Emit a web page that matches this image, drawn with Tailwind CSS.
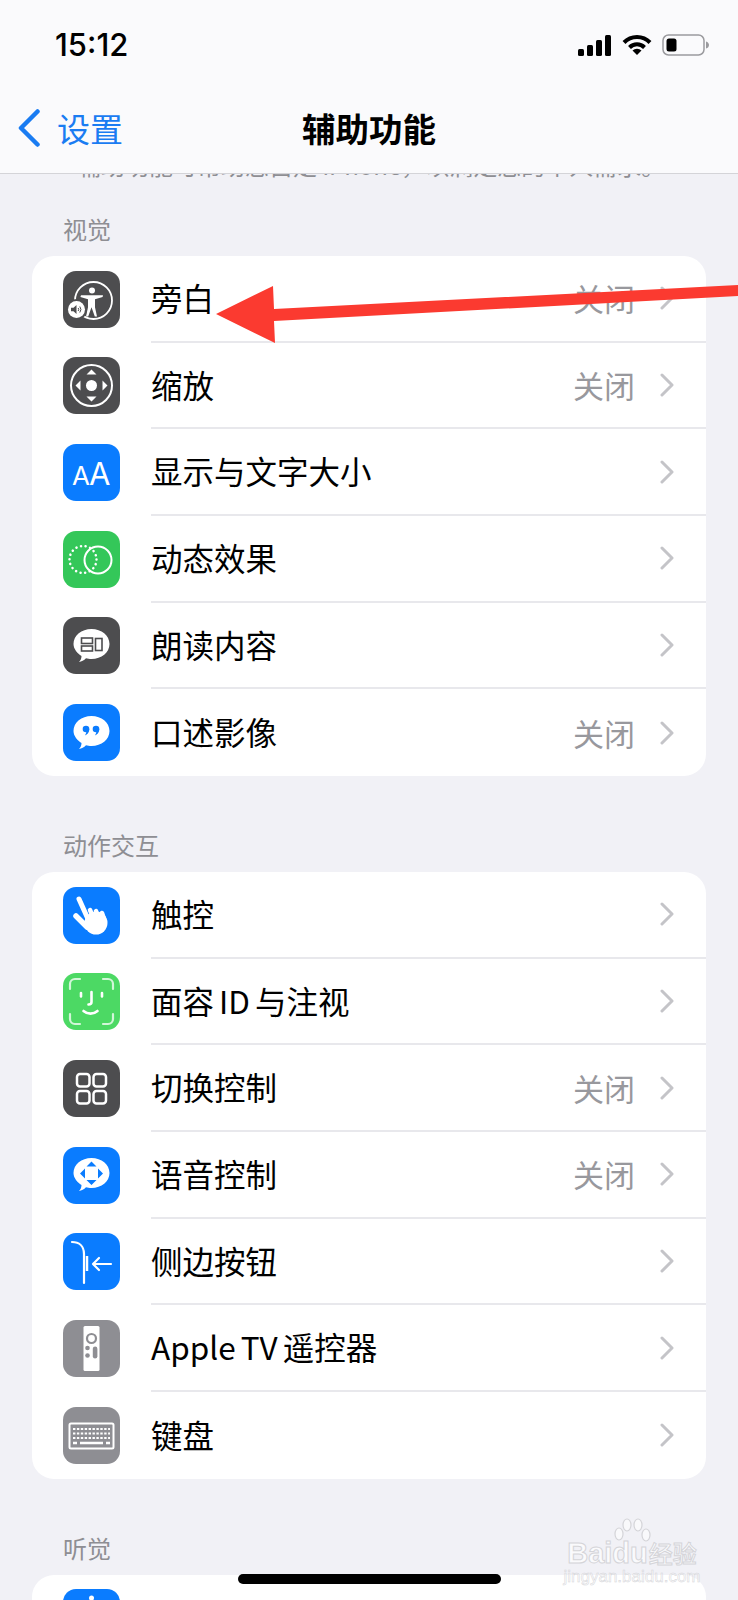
<!DOCTYPE html>
<html lang="zh-CN">

<head>
    <meta charset="UTF-8">
    <meta name="viewport" content="width=device-width, initial-scale=1.0">
    <title>辅助功能</title>
    <script src="https://cdn.jsdelivr.net/npm/@tailwindcss/browser@4"></script>
</head>

<body class="bg-[#f1f1f6]">
    <div class="relative w-[738px] h-[1600px] overflow-hidden bg-[#f1f1f6] text-black font-['Noto_Sans_CJK_SC','Liberation_Sans',sans-serif]">

        <!-- Status bar + nav -->
        <header class="relative z-10 h-[174px] bg-[#fafafc] border-b border-[#d4d4d8]">
            <div class="flex items-center justify-between h-[90px] pl-[55px] pr-[28px]">
                <span class="text-[31px] font-medium font-['Inter',sans-serif] tracking-[0px]">15:12</span>
                <div class="flex items-center gap-[10px]">
                    <svg width="34" height="21" viewBox="0 0 34 21" fill="black">
                        <rect x="0" y="14" width="6" height="7" rx="1.5" />
                        <rect x="9" y="10" width="6" height="11" rx="1.5" />
                        <rect x="18" y="5" width="6" height="16" rx="1.5" />
                        <rect x="27" y="0" width="6" height="21" rx="1.5" />
                    </svg>
                    <svg width="30" height="22" viewBox="0 0 30 22" fill="none" stroke="black" stroke-width="4">
                        <path d="M2 8.5a18 18 0 0 1 26 0" />
                        <path d="M7.5 13.5a10.500 10.500 0 0 1 15 0" />
                        <path d="M15 21l-4.500-4.500a6.500 6.500 0 0 1 9 0z" fill="black" stroke="none" />
                    </svg>
                    <svg width="48" height="22" viewBox="0 0 48 22" fill="none">
                        <rect x="1" y="1" width="41" height="20" rx="5.500" stroke="#9a9a9e" stroke-width="1.500" />
                        <rect x="4.500" y="4.500" width="10" height="13" rx="2.500" fill="black" />
                        <path d="M44 7.500c2 .5 3 2 3 3.500s-1 3-3 3.500z" fill="#9a9a9e" />
                    </svg>
                </div>
            </div>
            <div class="grid grid-cols-[1fr_auto_1fr] items-center h-[80px] pb-[4px]">
                <div class="flex items-center pl-[18px] gap-[17px] text-[#1a7cf2]">
                    <svg width="22" height="38" viewBox="0 0 22 38" fill="none" stroke="#1a7cf2" stroke-width="4.500" stroke-linecap="round" stroke-linejoin="round">
                        <path d="M19.500 2.500L3 19l16.500 16.500" />
                    </svg>
                    <span class="text-[33px] leading-none">设置</span>
                </div>
                <h1 class="text-[33.500px] leading-none font-bold">辅助功能</h1>
                <div></div>
            </div>
        </header>

        <p class="mt-[-24px] h-[30px] pl-[77px] text-[24px] leading-[30px] text-[#8e8e93] whitespace-nowrap">辅助功能可帮助您自定 iPhone，以满足您的个人需求。</p>

        <main id="sections" class="mt-[35px]"></main>

        <!-- Red annotation arrow -->
        <svg class="absolute left-0 top-0 z-20" width="738" height="360" viewBox="0 0 738 360">
            <path d="M216 314L273 286L274 309L738 285L738 296L274 321L275 343Z" fill="#fb3a30" />
        </svg>

        <!-- Watermark -->
        <div class="absolute z-20 left-[566px] top-[1518px] w-[132px] flex flex-col items-center text-white/70 font-['Liberation_Sans',sans-serif] whitespace-nowrap">
            <svg width="40" height="26" viewBox="0 0 40 26" fill="white" fill-opacity="0.6" stroke="#d4d4d8" stroke-width="1.200">
                <ellipse cx="7" cy="16" rx="4" ry="6" />
                <ellipse cx="15" cy="7" rx="4" ry="6" />
                <ellipse cx="26" cy="7" rx="4" ry="6" />
                <ellipse cx="34" cy="17" rx="4" ry="6" />
            </svg>
            <div class="flex items-center text-[29px] leading-[26px] font-bold [-webkit-text-stroke:1px_#d4d4d8] -mt-[4px]">Baidu<span class="text-[24px] ml-[1px] font-medium font-['Noto_Sans_CJK_SC',sans-serif]">经验</span></div>
            <div class="text-[17px] leading-[20px] mt-[1px] text-white/50 [-webkit-text-stroke:0.5px_#d4d4d8]">jingyan.baidu.com</div>
        </div>

        <!-- Home indicator -->
        <div class="absolute z-30 left-[238px] top-[1574px] w-[263px] h-[10px] rounded-full bg-black"></div>
    </div>

    <script>
        const icons = {
            voiceover: `<circle cx="30.500" cy="29.500" r="18.500" fill="none" stroke="white" stroke-width="1.800"/><circle cx="29" cy="19.500" r="3" fill="white"/><path d="M18 24.200h22l-.4 1.800-7.600 2.200v8l2 9.300h-2.200l-3.300-9.300-3.300 9.300h-2.200l2-9.300v-8l-7.600-2.200z" fill="white"/><circle cx="13.500" cy="38.500" r="10.500" fill="#4d4d4f"/><circle cx="13.500" cy="38.500" r="8.500" fill="white"/><path d="M8 36.700h2.500l3-2.700v9l-3-2.700H8z" fill="#4d4d4f"/><path d="M15.200 37a2.500 2.500 0 0 1 0 3M16.800 35.500a5 5 0 0 1 0 6" fill="none" stroke="#4d4d4f" stroke-width="1"/>`,
            zoom: `<circle cx="28.500" cy="28.500" r="20.500" fill="none" stroke="white" stroke-width="2"/><circle cx="28.500" cy="28.500" r="5.500" fill="white"/><path d="M28.500 12.500l5 5h-10zM28.500 44.500l-5-5h10zM12.500 28.500l5-5v10zM44.500 28.500l-5 5v-10z" fill="white"/>`,
            text: `<text x="9" y="40.500" font-size="26" fill="white" font-family="Inter, sans-serif">A</text><text x="26" y="40.500" font-size="31" fill="white" font-family="Inter, sans-serif">A</text>`,
            motion: `<circle cx="20" cy="28.500" r="13.500" fill="none" stroke="white" stroke-width="2.500" stroke-linecap="round" stroke-dasharray="0.1 4.600"/><circle cx="35" cy="29" r="13.500" fill="none" stroke="white" stroke-width="2"/>`,
            speech: `<path d="M28.500 12c10 0 18 6.500 18 15s-8 15-18 15c-2 0-4-.3-5.500-.7-2 2-4.500 3.500-7 3.700 1.500-1.500 2.500-3.500 2.500-6-4-2.500-8-7-8-12 0-8.500 8-15 18-15z" fill="white"/><rect x="18.500" y="21" width="11" height="5.500" fill="none" stroke="#4d4d4f" stroke-width="1.600"/><rect x="18.500" y="29" width="11" height="5" fill="none" stroke="#4d4d4f" stroke-width="1.600"/><rect x="32.500" y="21.500" width="6.500" height="12" fill="none" stroke="#4d4d4f" stroke-width="1.600"/>`,
            audio: `<path d="M28.500 12c10 0 18 6.500 18 15s-8 15-18 15c-2 0-4-.3-5.500-.7-2 2-4.500 3.500-7 3.700 1.500-1.500 2.500-3.500 2.500-6-4-2.500-8-7-8-12 0-8.500 8-15 18-15z" fill="white"/><circle cx="23" cy="25" r="3.300" fill="#0a7cff"/><path d="M26.300 25c0 3.500-1.800 5.500-4.500 6.500 1-1.500 1.500-2.500 1.500-4z" fill="#0a7cff"/><circle cx="33" cy="25" r="3.300" fill="#0a7cff"/><path d="M36.300 25c0 3.500-1.800 5.500-4.500 6.500 1-1.500 1.500-2.500 1.500-4z" fill="#0a7cff"/>`,
            touch: `<g stroke="white" stroke-linecap="round" fill="none"><path d="M16 12l9 20" stroke-width="5"/><path d="M13 29l11 11" stroke-width="5.500"/><path d="M27 23l3 7M33 24l2.500 6M39 26l2 6" stroke-width="4.500"/></g><circle cx="33" cy="36" r="11.500" fill="white"/>`,
            face: `<g fill="none" stroke="white" stroke-opacity="0.75" stroke-width="2.200" stroke-linecap="round"><path d="M7 16v-5a5 5 0 0 1 5-5h5M40 6h5a5 5 0 0 1 5 5v5M7 41v5a5 5 0 0 0 5 5h5M40 51h5a5 5 0 0 0 5-5v-5"/></g><g fill="none" stroke="white" stroke-width="2.600" stroke-linecap="round"><path d="M18 20v3.500M39 20v3.500"/><path d="M28.500 19v10c0 2-1 2.500-3 2.500"/><path d="M20.500 38c4 3.500 10 3.500 14 0"/></g>`,
            switcher: `<g fill="none" stroke="white" stroke-width="2.500"><rect x="14" y="14" width="12.500" height="12.500" rx="3"/><rect x="30.500" y="14" width="12.500" height="12.500" rx="3"/><rect x="14" y="31" width="12.500" height="12.500" rx="3"/><rect x="30.500" y="31" width="12.500" height="12.500" rx="3"/></g>`,
            voice: `<path d="M28.500 11c10 0 18 6.500 18 15s-8 15-18 15c-2 0-4-.3-5.500-.7-2 2-4.500 3.500-7 3.700 1.500-1.500 2.500-3.500 2.500-6-4-2.500-8-7-8-12 0-8.500 8-15 18-15z" fill="white"/><path d="M28.500 14.500l5 5h-10zM28.500 38l-5-5h10zM17 26.500l5-5v10zM40 26.500l-5 5v-10z" fill="#0a7cff"/>`,
            side: `<g fill="none" stroke="white" stroke-linecap="round"><path d="M9 9c7 0 12 4 12 12v29" stroke-width="2.200"/><path d="M24 23v15" stroke-width="2.500" stroke-linecap="butt"/><path d="M48 31H31M36 25l-6 6 6 6" stroke-width="2.200" stroke-linejoin="round"/></g>`,
            remote: `<rect x="20.500" y="6" width="16" height="45" rx="1.500" fill="white"/><circle cx="28.500" cy="18.500" r="4.500" fill="none" stroke="#8e8e93" stroke-width="2.200"/><circle cx="24.500" cy="28" r="2.300" fill="#8e8e93"/><circle cx="24.500" cy="35.500" r="2.300" fill="#8e8e93"/><rect x="29.800" y="26.500" width="4.600" height="12" rx="2.300" fill="#8e8e93"/>`,
            keyboard: `<rect x="6.500" y="16.500" width="44" height="25" rx="1.500" fill="none" stroke="white" stroke-width="2"/><g fill="none" stroke="white" stroke-width="2.200" stroke-dasharray="2.400 1.500"><path d="M10 22h37M10 26.500h37M10 31h37"/></g><path d="M17 36h23" stroke="white" stroke-width="2.500"/><path d="M10 36h4M43 36h4" stroke="white" stroke-width="2.500"/>`,
            hearing: `<circle cx="28.500" cy="9" r="2.500" fill="white"/>`
        };

        const sections = [
            {
                title: "视觉",
                rows: [
                    { icon: "voiceover", color: "bg-[#4d4d4f]", name: "旁白", value: "关闭" },
                    { icon: "zoom", color: "bg-[#4d4d4f]", name: "缩放", value: "关闭" },
                    { icon: "text", color: "bg-[#0a7cff]", name: "显示与文字大小" },
                    { icon: "motion", color: "bg-[#34c759]", name: "动态效果" },
                    { icon: "speech", color: "bg-[#4d4d4f]", name: "朗读内容" },
                    { icon: "audio", color: "bg-[#0a7cff]", name: "口述影像", value: "关闭" }
                ]
            },
            {
                title: "动作交互",
                rows: [
                    { icon: "touch", color: "bg-[#0a7cff]", name: "触控" },
                    { icon: "face", color: "bg-[#4cd964]", name: "面容 ID 与注视" },
                    { icon: "switcher", color: "bg-[#4d4d4f]", name: "切换控制", value: "关闭" },
                    { icon: "voice", color: "bg-[#0a7cff]", name: "语音控制", value: "关闭" },
                    { icon: "side", color: "bg-[#0a7cff]", name: "侧边按钮" },
                    { icon: "remote", color: "bg-[#8e8e93]", name: "Apple TV 遥控器" },
                    { icon: "keyboard", color: "bg-[#8e8e93]", name: "键盘" }
                ]
            },
            {
                title: "听觉",
                rows: [
                    { icon: "hearing", color: "bg-[#0a7cff]", name: "" }
                ]
            }
        ];

        function renderRow(row, isLast) {
            return `
                <div class="flex items-center h-[86.670px] pl-[31px]">
                    <div class="w-[57px] h-[57px] shrink-0 rounded-[13px] ${row.color}">
                        <svg width="57" height="57" viewBox="0 0 57 57">${icons[row.icon]}</svg>
                    </div>
                    <div class="flex items-center flex-1 h-full ml-[31px] pr-[32px] ${isLast ? "" : "border-b-2 border-[#e8e8ec]"}">
                        <span class="flex-1 pb-[1px] text-[31.500px] leading-none whitespace-nowrap [word-spacing:-2px]">${row.name}</span>
                        ${row.value ? `<span class="pb-[1px] text-[31px] leading-none text-[#98989d]">${row.value}</span>` : ""}
                        <svg class="ml-[25px]" width="14" height="24" viewBox="0 0 14 24" fill="none" stroke="#c4c4c8" stroke-width="3" stroke-linecap="round" stroke-linejoin="round">
                            <path d="M2 2l10 10L2 22" />
                        </svg>
                    </div>
                </div>`;
        }

        document.getElementById("sections").innerHTML = sections.map(section => `
            <section class="mb-[55px] mx-[32px]">
                <h2 class="h-[30px] mb-[11px] pl-[31px] -translate-y-[1.500px] text-[24px] leading-[30px] font-normal text-[#8e8e93]">${section.title}</h2>
                <div class="bg-white rounded-[22px] overflow-hidden">
                    ${section.rows.map((row, i) => renderRow(row, i === section.rows.length - 1)).join("")}
                </div>
            </section>`).join("");
    </script>

</body>

</html>
